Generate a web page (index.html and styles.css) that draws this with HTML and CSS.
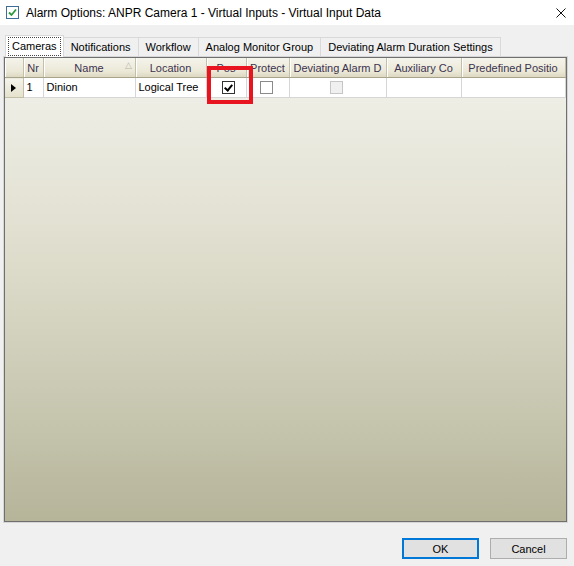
FILE: index.html
```html
<!DOCTYPE html>
<html>

<head>
    <meta charset="UTF-8">
    <title>Alarm Options</title>
    <link rel="stylesheet" href="styles.css">
</head>

<body>
    <div class="titlebar">
        <svg class="app-icon" width="13" height="13" viewBox="0 0 13 13">
            <rect x="0.5" y="0.5" width="12" height="12" fill="#fff" stroke="#3c6e9a"/>
            <path d="M3 6.5 L5.5 9 L10 3.5" fill="none" stroke="#2a9a3a" stroke-width="1.8"/>
        </svg>
        <span class="title">Alarm Options: ANPR Camera 1 - Virtual Inputs - Virtual Input Data</span>
        <svg class="close" width="10" height="10" viewBox="0 0 10 10">
            <path d="M0.5 0.5 L9.5 9.5 M9.5 0.5 L0.5 9.5" stroke="#111" stroke-width="1"/>
        </svg>
    </div>

    <div class="dialog">
        <div class="tabs">
            <div class="tab active"><span class="focus">Cameras</span></div>
            <div class="tab">Notifications</div>
            <div class="tab">Workflow</div>
            <div class="tab">Analog Monitor Group</div>
            <div class="tab">Deviating Alarm Duration Settings</div>
        </div>

        <div class="panel">
            <table class="grid">
                <colgroup>
                    <col style="width:18px">
                    <col style="width:20px">
                    <col style="width:92px">
                    <col style="width:71px">
                    <col style="width:40px">
                    <col style="width:43px">
                    <col style="width:97px">
                    <col style="width:75px">
                    <col style="width:104px">
                </colgroup>
                <tr class="head">
                    <th></th>
                    <th>Nr</th>
                    <th class="sorted">Name<span class="sort">&#9651;</span></th>
                    <th>Location</th>
                    <th class="pos">Pos</th>
                    <th>Protect</th>
                    <th>Deviating Alarm D</th>
                    <th>Auxiliary Co</th>
                    <th>Predefined Positio</th>
                </tr>
                <tr class="row">
                    <td class="rowhead"><span class="arrow"></span></td>
                    <td>1</td>
                    <td>Dinion</td>
                    <td>Logical Tree</td>
                    <td class="center pos-cell"><span class="check checked"></span></td>
                    <td class="center"><span class="check"></span></td>
                    <td class="center"><span class="check disabled"></span></td>
                    <td></td>
                    <td></td>
                </tr>
            </table>
            <div class="marker"></div>
        </div>

        <div class="buttons">
            <button class="btn default">OK</button>
            <button class="btn">Cancel</button>
        </div>
    </div>
</body>

</html>
```

FILE: styles.css
```css
body {
    margin: 0;
    width: 574px;
    height: 566px;
    overflow: hidden;
    background-color: #f0f0f0;
    font-family: "Liberation Sans", Arial, sans-serif;
    font-size: 11px;
    color: #000;
}

.titlebar {
    height: 25px;
    background-color: #fff;
    display: flex;
    align-items: center;
    padding-left: 6px;
}

.title {
    margin-left: 7px;
    font-size: 12px;
}

.close {
    margin-left: auto;
    margin-right: 8px;
}

.dialog {
    padding: 10px 7px 0 4px;
}

.tabs {
    display: flex;
    align-items: flex-end;
    height: 22px;
    padding-left: 1px;
}

.tab {
    height: 19px;
    line-height: 19px;
    padding: 0 7px;
    border: 1px solid #d9d9d9;
    border-bottom: none;
    margin-left: -1px;
    background-color: #f0f0f0;
    white-space: nowrap;
}

.tab.active {
    height: 21px;
    line-height: 21px;
    padding: 0 2px;
    margin-left: 0;
    background-color: #fff;
    position: relative;
    z-index: 1;
}

.tab.active .focus {
    display: inline-block;
    line-height: 17px;
    padding: 0 3px;
    border: 1px dotted #444;
}

.panel {
    position: relative;
    height: 463px;
    border: 1px solid #6f6f6f;
    box-shadow: 0 0 0 1px #d6d6d6;
    background: linear-gradient(to bottom, #f3f2ec, #dddccb 45%, #b6b59a);
}

.grid {
    border-collapse: collapse;
    table-layout: fixed;
    width: 560px;
}

.grid th {
    height: 19px;
    padding: 0 3px;
    font-weight: normal;
    color: #3b3350;
    text-align: center;
    white-space: nowrap;
    overflow: hidden;
    background: linear-gradient(to bottom, #f5f4ec, #ebe8d7 70%, #dcd8c1);
    border-right: 1px solid #c4c0a8;
    border-bottom: 1px solid #a8a48c;
    box-shadow: inset 1px 0 0 #fff;
}

.grid th.sorted {
    position: relative;
}

.sort {
    position: absolute;
    right: 3px;
    top: 2px;
    font-size: 9px;
    color: #b8b6a6;
}

.grid td {
    height: 17px;
    padding: 0 3px 2px;
    background-color: #fff;
    border-right: 1px solid #d6d6d6;
    border-bottom: 1px solid #d6d6d6;
    white-space: nowrap;
    overflow: hidden;
}

.grid td.rowhead {
    background: linear-gradient(to bottom, #f5f4ec, #e4e1cc);
    border-right: 1px solid #c4c0a8;
    border-bottom: 1px solid #c4c0a8;
    padding: 0;
}

.arrow {
    display: block;
    width: 0;
    height: 0;
    margin: 0 0 0 6px;
    border-top: 4px solid transparent;
    border-bottom: 4px solid transparent;
    border-left: 5px solid #000;
}

.grid td.center {
    text-align: center;
    padding: 0 3px 0 0;
}

.grid td.pos-cell {
    padding: 0 0 0 5px;
}

.check {
    display: inline-block;
    vertical-align: middle;
    width: 11px;
    height: 11px;
    border: 1px solid #8a8a8a;
    background-color: #fff;
    position: relative;
}

.check.checked {
    border-color: #333;
}

.check.checked::after {
    content: "";
    position: absolute;
    left: 3px;
    top: 1px;
    width: 3px;
    height: 6px;
    border-right: 2px solid #000;
    border-bottom: 2px solid #000;
    transform: rotate(40deg);
}

.check.disabled {
    border-color: #c6c6c6;
    background-color: #f0f0f0;
}

/* red highlight drawn over the "Pos" column */
.marker {
    position: absolute;
    left: 202px;
    top: 8px;
    width: 38px;
    height: 30px;
    border: 4px solid #e8141f;
}

.buttons {
    display: flex;
    justify-content: flex-end;
    gap: 11px;
    margin-top: 16px;
    padding-right: 0;
}

.btn {
    width: 77px;
    height: 21px;
    padding: 0;
    font-family: "Liberation Sans", Arial, sans-serif;
    font-size: 11px;
    color: #000;
    background-color: #e1e1e1;
    border: 1px solid #adadad;
}

.btn.default {
    border: 2px solid #0078d7;
}
```
